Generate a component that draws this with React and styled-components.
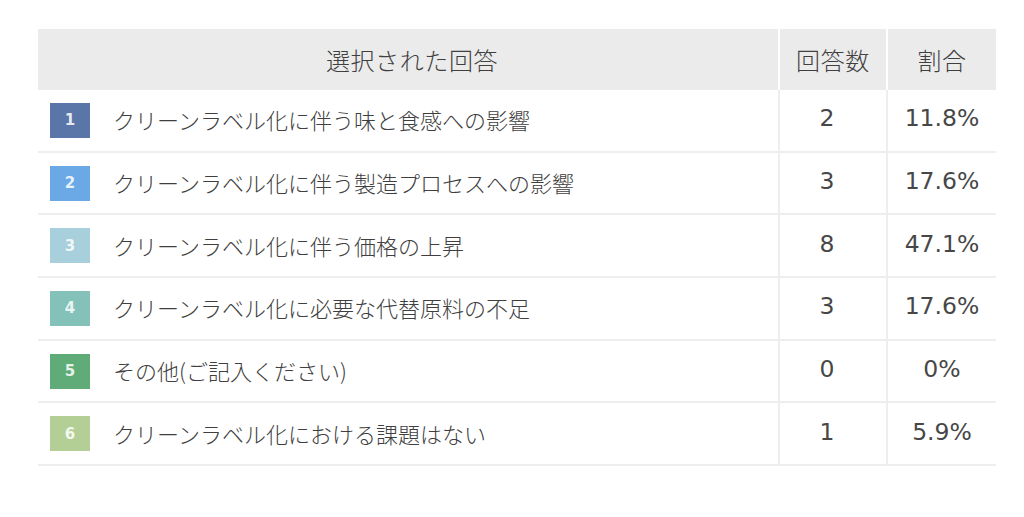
import React from "react";
import styled, { createGlobalStyle } from "styled-components";

const GlobalStyle = createGlobalStyle`
  html, body {
    margin: 0;
    padding: 0;
    background: #ffffff;
  }
  body {
    font-family: "Noto Sans CJK JP", "Noto Sans", sans-serif;
    color: #444444;
  }
`;

const Page = styled.div`
  padding: 29px 0 0 38px;
`;

const Table = styled.div`
  width: 958px;
  display: grid;
  grid-template-columns: 742px 108px 108px;
`;

const HeadCell = styled.div`
  height: 61px;
  background: #ebebeb;
  border-right: ${(p) => (p.$last ? "none" : "2px solid #ffffff")};
  display: flex;
  align-items: center;
  justify-content: center;
  font-size: 24px;
  font-weight: 300;
  color: #3f3f3f;
  letter-spacing: 0.6px;
  padding-left: ${(p) => (p.$first ? 8 : 0)}px;
  box-sizing: border-box;
`;

const Cell = styled.div`
  height: 62.7px;
  border-bottom: 2px solid #eeeeee;
  border-right: ${(p) => (p.$last ? "none" : "2px solid #eeeeee")};
  display: flex;
  align-items: center;
  justify-content: ${(p) => (p.$center ? "center" : "flex-start")};
  padding-right: ${(p) => p.$pr || 0}px;
  padding-bottom: 4px;
  box-sizing: border-box;
`;

const AnswerCell = styled(Cell)`
  padding-left: 12px;
  padding-bottom: 2px;
  gap: 23px;
`;

const Badge = styled.div`
  width: 40px;
  height: 35px;
  flex: none;
  margin-top: 2px;
  background: ${(p) => p.$color};
  color: rgba(255, 255, 255, 0.85);
  display: flex;
  align-items: center;
  justify-content: center;
  font-family: "DejaVu Sans", sans-serif;
  font-weight: bold;
  font-size: 15px;
`;

const Label = styled.span`
  font-size: 22px;
  font-weight: 300;
  color: #3f3f3f;
  white-space: nowrap;
`;

const Num = styled.span`
  font-family: "DejaVu Sans", "Liberation Sans", sans-serif;
  font-size: 23.5px;
  color: #474747;
`;

const rows = [
  { color: "#5a75a8", label: "クリーンラベル化に伴う味と食感への影響", count: 2, pct: "11.8%" },
  { color: "#6ba9e6", label: "クリーンラベル化に伴う製造プロセスへの影響", count: 3, pct: "17.6%" },
  { color: "#a8d0dc", label: "クリーンラベル化に伴う価格の上昇", count: 8, pct: "47.1%" },
  { color: "#84c1b8", label: "クリーンラベル化に必要な代替原料の不足", count: 3, pct: "17.6%" },
  { color: "#5fac78", label: "その他(ご記入ください)", count: 0, pct: "0%" },
  { color: "#b4cf95", label: "クリーンラベル化における課題はない", count: 1, pct: "5.9%" },
];

export default function App() {
  return (
    <>
      <GlobalStyle />
      <Page>
        <Table>
          <HeadCell $first>選択された回答</HeadCell>
          <HeadCell>回答数</HeadCell>
          <HeadCell $last>割合</HeadCell>
          {rows.map((r, i) => (
            <React.Fragment key={i}>
              <AnswerCell>
                <Badge $color={r.color}>{i + 1}</Badge>
                <Label>{r.label}</Label>
              </AnswerCell>
              <Cell $center $pr={12}>
                <Num>{r.count}</Num>
              </Cell>
              <Cell $center $last>
                <Num>{r.pct}</Num>
              </Cell>
            </React.Fragment>
          ))}
        </Table>
      </Page>
    </>
  );
}
